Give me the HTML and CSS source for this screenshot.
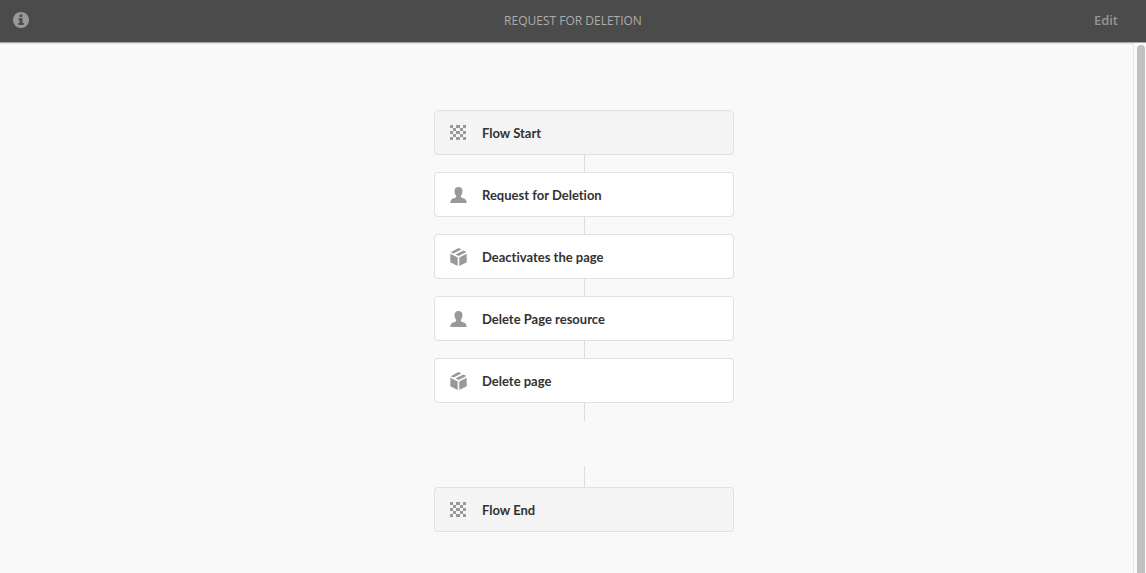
FILE: index.html
```html
<!DOCTYPE html>
<html lang="en">
<head>
<meta charset="utf-8">
<title>Request for Deletion</title>
<link rel="stylesheet" href="styles.css">
</head>
<body>
<svg class="symbols" aria-hidden="true">
  <symbol id="flag" viewBox="0 0 16 15">
    <path d="M0 0h3v3H0zM6 0h4v3H6zM13 0h3v3h-3zM3 3h3v3H3zM10 3h3v3h-3zM0 6h3v3H0zM6 6h4v3H6zM13 6h3v3h-3zM3 9h3v3H3zM10 9h3v3h-3zM0 12h3v3H0zM6 12h4v3H6zM13 12h3v3h-3z"/>
  </symbol>
  <symbol id="user" viewBox="0 0 17 18">
    <path d="M8.500 1c2.500 0 4 1.600 4 4.200 0 1.800-.7 3.300-1.600 4.200v1.400c0 .5.300.7.800.9 3 .8 4.900 1.700 5 5.300H.3c.1-3.600 2-4.500 5-5.300.5-.2.800-.4.800-.9V9.400C5.200 8.500 4.500 7 4.500 5.200 4.500 2.600 6 1 8.500 1z"/>
  </symbol>
  <symbol id="box" viewBox="0 0 17 18">
    <path d="M.7 4.200L8.500 0l3 1.300L3.700 5.400zM5.400 6.600l7.900-4.200 3.200 1.500-7.900 4.200zM.3 5.700l7.400 3.700V18L.3 14.200zM9.300 9.400l7.400-3.700v8.500L9.300 18z"/>
  </symbol>
</svg>

<header class="bar">
  <button class="info" type="button" aria-label="Information">
    <svg viewBox="0 0 16 16" aria-hidden="true">
      <circle class="disc" cx="8" cy="8" r="8"/>
      <path class="letter" d="M6.600 2.500h2.800v2.500H6.600zM5.500 6.300h4v4.700h1.300V13H5.300v-2h1.300V8.300H5.500z"/>
    </svg>
  </button>
  <h1 class="title">REQUEST FOR DELETION</h1>
  <button class="edit" type="button">Edit</button>
</header>

<div class="body">
  <main class="canvas">
    <ol class="flow">
      <li class="step end"><svg class="icon flag"><use href="#flag"/></svg><span>Flow Start</span></li>
      <li class="step"><svg class="icon"><use href="#user"/></svg><span>Request for Deletion</span></li>
      <li class="step"><svg class="icon"><use href="#box"/></svg><span>Deactivates the page</span></li>
      <li class="step"><svg class="icon"><use href="#user"/></svg><span>Delete Page resource</span></li>
      <li class="step"><svg class="icon"><use href="#box"/></svg><span>Delete page</span></li>
      <li class="drop" aria-hidden="true"></li>
      <li class="step end"><svg class="icon flag"><use href="#flag"/></svg><span>Flow End</span></li>
    </ol>
  </main>
  <div class="scrollbar" aria-hidden="true"><div class="thumb"></div></div>
</div>
</body>
</html>
```

FILE: styles.css
```css
* {
  box-sizing: border-box;
}

body {
  display: flex;
  flex-direction: column;
  height: 100vh;
  margin: 0;
  overflow: hidden;
  background: #f9f9f9;
  color: #323232;
  font-family: "Open Sans", "Noto Sans", sans-serif;
}

.symbols {
  display: none;
}

button {
  padding: 0;
  border: 0;
  background: none;
  font: inherit;
  cursor: pointer;
}

.bar {
  display: grid;
  flex: none;
  grid-template-columns: 1fr auto 1fr;
  align-items: center;
  height: 43px;
  padding: 0 28px 2px 13px;
  border-bottom: 1px solid #a8a8a8;
  background: #4b4b4b;
  box-shadow: 0 1px 1px #e2e2e2;
}

.info {
  justify-self: start;
  width: 16px;
  height: 16px;
}

.info svg {
  display: block;
}

.disc {
  fill: #999;
}

.letter {
  fill: #4b4b4b;
}

.title {
  margin: 0 0 0 15px;
  color: #acacac;
  font-size: 12px;
  font-weight: 400;
}

.edit {
  justify-self: end;
  color: #969696;
  font-size: 13px;
  font-weight: 600;
}

.body {
  display: flex;
  flex: 1;
  min-height: 0;
}

.canvas {
  flex: 1;
  padding: 67px 0 41px 35px;
}

.flow {
  display: flex;
  flex-direction: column;
  width: 300px;
  margin: 0 auto;
  padding: 0;
  list-style: none;
}

.step {
  display: flex;
  align-items: center;
  gap: 15px;
  height: 45px;
  padding: 0 15px;
  border: 1px solid #e0e0e0;
  border-radius: 4px;
  background: #fff;
  font-family: Lato, "Open Sans", sans-serif;
  font-size: 13px;
  font-variant-ligatures: none;
  font-weight: 700;
}

.end {
  background: #f4f4f4;
}

.step + .step::before,
.drop::before,
.drop::after {
  content: "";
  width: 1px;
  background: #dcdcdc;
}

.step + .step {
  position: relative;
  margin-top: 17px;
}

.step + .step::before {
  position: absolute;
  bottom: 100%;
  left: 50%;
  height: 18px;
}

.drop {
  display: flex;
  flex-direction: column;
  justify-content: space-between;
  align-items: center;
  height: 84px;
}

.drop::before {
  height: 18px;
}

.drop::after {
  height: 21px;
}

.icon {
  flex: none;
  width: 17px;
  height: 18px;
  fill: #999;
}

.flag {
  width: 16px;
  height: 15px;
  margin-right: 1px;
}

.scrollbar {
  flex: none;
  width: 13px;
  padding: 2px 1px 0 3px;
  border-left: 1px solid #e7e7e7;
  background: #fafafa;
}

.thumb {
  height: 100%;
  border-radius: 4px 4px 0 0;
  background: #c1c1c1;
}
```
